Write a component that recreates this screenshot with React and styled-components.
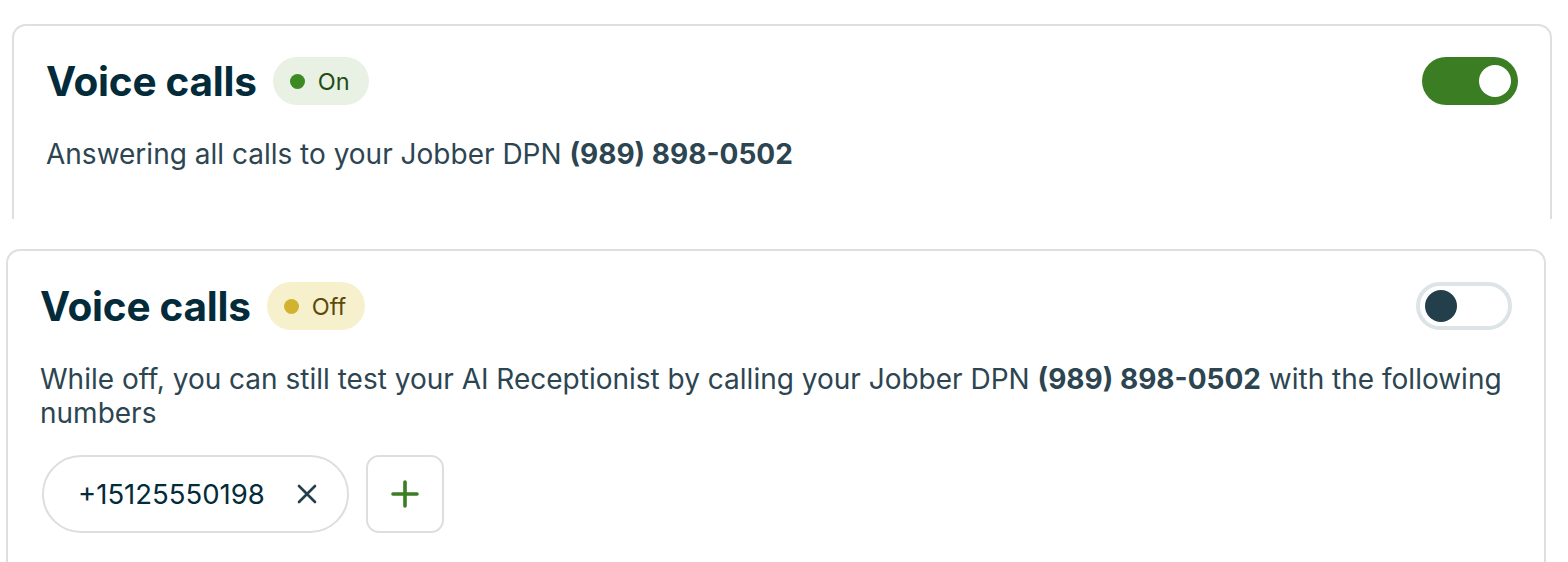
import React from "react";
import styled, { createGlobalStyle } from "styled-components";

const GlobalStyle = createGlobalStyle`
  body {
    margin: 0;
    background: #fff;
    font-family: Inter, "Noto Sans", sans-serif;
    color: #032b3a;
  }
`;

const Page = styled.div`
  display: flex;
  flex-direction: column;
  gap: 30px;
  padding-top: 24px;
  height: 562px;
  overflow: hidden;
`;

const Card = styled.section`
  box-sizing: border-box;
  margin-left: ${(p) => p.$left}px;
  width: ${(p) => p.$width}px;
  border: 2px solid #dfdfdf;
  border-radius: 14px;
  padding: 31px 32px 40px 32px;
  background: #fff;
  flex-shrink: 0;
  ${(p) =>
    p.$clipped &&
    `
    height: 195px;
    border-bottom: none;
    border-bottom-left-radius: 0;
    border-bottom-right-radius: 0;
    overflow: hidden;
  `}
`;

const Header = styled.div`
  display: flex;
  align-items: center;
  height: 48px;
`;

const Title = styled.h2`
  margin: 0 16px 0 0;
  font-size: 40.5px;
  font-weight: 700;
  letter-spacing: -0.25px;
  color: #032b3a;
`;

const Badge = styled.span`
  display: inline-flex;
  align-items: center;
  gap: 13px;
  height: 48px;
  box-sizing: border-box;
  padding: 0 19px 0 17px;
  border-radius: 24px;
  font-size: 23.5px;
  background: ${(p) => (p.$on ? "#e8f1e3" : "#f7f0cd")};
  color: ${(p) => (p.$on ? "#1f4d12" : "#5b4b0b")};
`;

const Dot = styled.span`
  width: 15px;
  height: 15px;
  border-radius: 50%;
  background: ${(p) => (p.$on ? "#3b8a22" : "#d2b32f")};
`;

const Toggle = styled.button`
  margin-left: auto;
  box-sizing: border-box;
  width: 96px;
  height: 48px;
  border-radius: 24px;
  border: ${(p) => (p.$on ? "none" : "4px solid #dde4e5")};
  background: ${(p) => (p.$on ? "#3b7d23" : "#fff")};
  display: flex;
  align-items: center;
  justify-content: ${(p) => (p.$on ? "flex-end" : "flex-start")};
  padding: 0 ${(p) => (p.$on ? "7px" : "5px")};
  cursor: pointer;
`;

const Knob = styled.span`
  width: 32px;
  height: 32px;
  border-radius: 50%;
  background: ${(p) => (p.$on ? "#fff" : "#243f4c")};
`;

const Desc = styled.p`
  margin: 32px 0 0;
  font-size: 28px;
  line-height: 34px;
  color: #2c4551;
  b {
    font-weight: 700;
  }
`;

const Numbers = styled.div`
  display: flex;
  gap: 17px;
  margin-top: 25px;
  padding-left: 2px;
`;

const Chip = styled.div`
  display: flex;
  align-items: center;
  gap: 31px;
  height: 78px;
  box-sizing: border-box;
  padding: 0 29px 0 34px;
  border: 2px solid #dedede;
  border-radius: 39px;
  font-size: 27.5px;
  color: #032b3a;
`;

const IconButton = styled.button`
  width: 78px;
  height: 78px;
  box-sizing: border-box;
  border: 2px solid #dedede;
  border-radius: 13px;
  background: #fff;
  display: flex;
  align-items: center;
  justify-content: center;
  padding: 0;
  cursor: pointer;
`;

const ClearIcon = () => (
  <svg width="22" height="22" viewBox="0 0 22 22" fill="none">
    <path d="M3 3 L19 19 M19 3 L3 19" stroke="#243f4c" strokeWidth="2.6" strokeLinecap="round" />
  </svg>
);

const PlusIcon = () => (
  <svg width="30" height="30" viewBox="0 0 30 30" fill="none">
    <path d="M15 3 V27 M3 15 H27" stroke="#3b7d23" strokeWidth="3.6" strokeLinecap="round" />
  </svg>
);

const Phone = () => <b>(989) 898-0502</b>;

export default function App() {
  return (
    <>
      <GlobalStyle />
      <Page>
        <Card $left={12} $width={1540} $clipped>
          <Header>
            <Title>Voice calls</Title>
            <Badge $on>
              <Dot $on />
              On
            </Badge>
            <Toggle $on aria-label="Voice calls on">
              <Knob $on />
            </Toggle>
          </Header>
          <Desc>
            Answering all calls to your Jobber DPN <Phone />
          </Desc>
        </Card>

        <Card $left={6} $width={1540}>
          <Header>
            <Title>Voice calls</Title>
            <Badge>
              <Dot />
              Off
            </Badge>
            <Toggle aria-label="Voice calls off">
              <Knob />
            </Toggle>
          </Header>
          <Desc>
            While off, you can still test your AI Receptionist by calling your
            Jobber DPN <Phone /> with the following numbers
          </Desc>
          <Numbers>
            <Chip>
              +15125550198
              <ClearIcon />
            </Chip>
            <IconButton aria-label="Add number">
              <PlusIcon />
            </IconButton>
          </Numbers>
        </Card>
      </Page>
    </>
  );
}
